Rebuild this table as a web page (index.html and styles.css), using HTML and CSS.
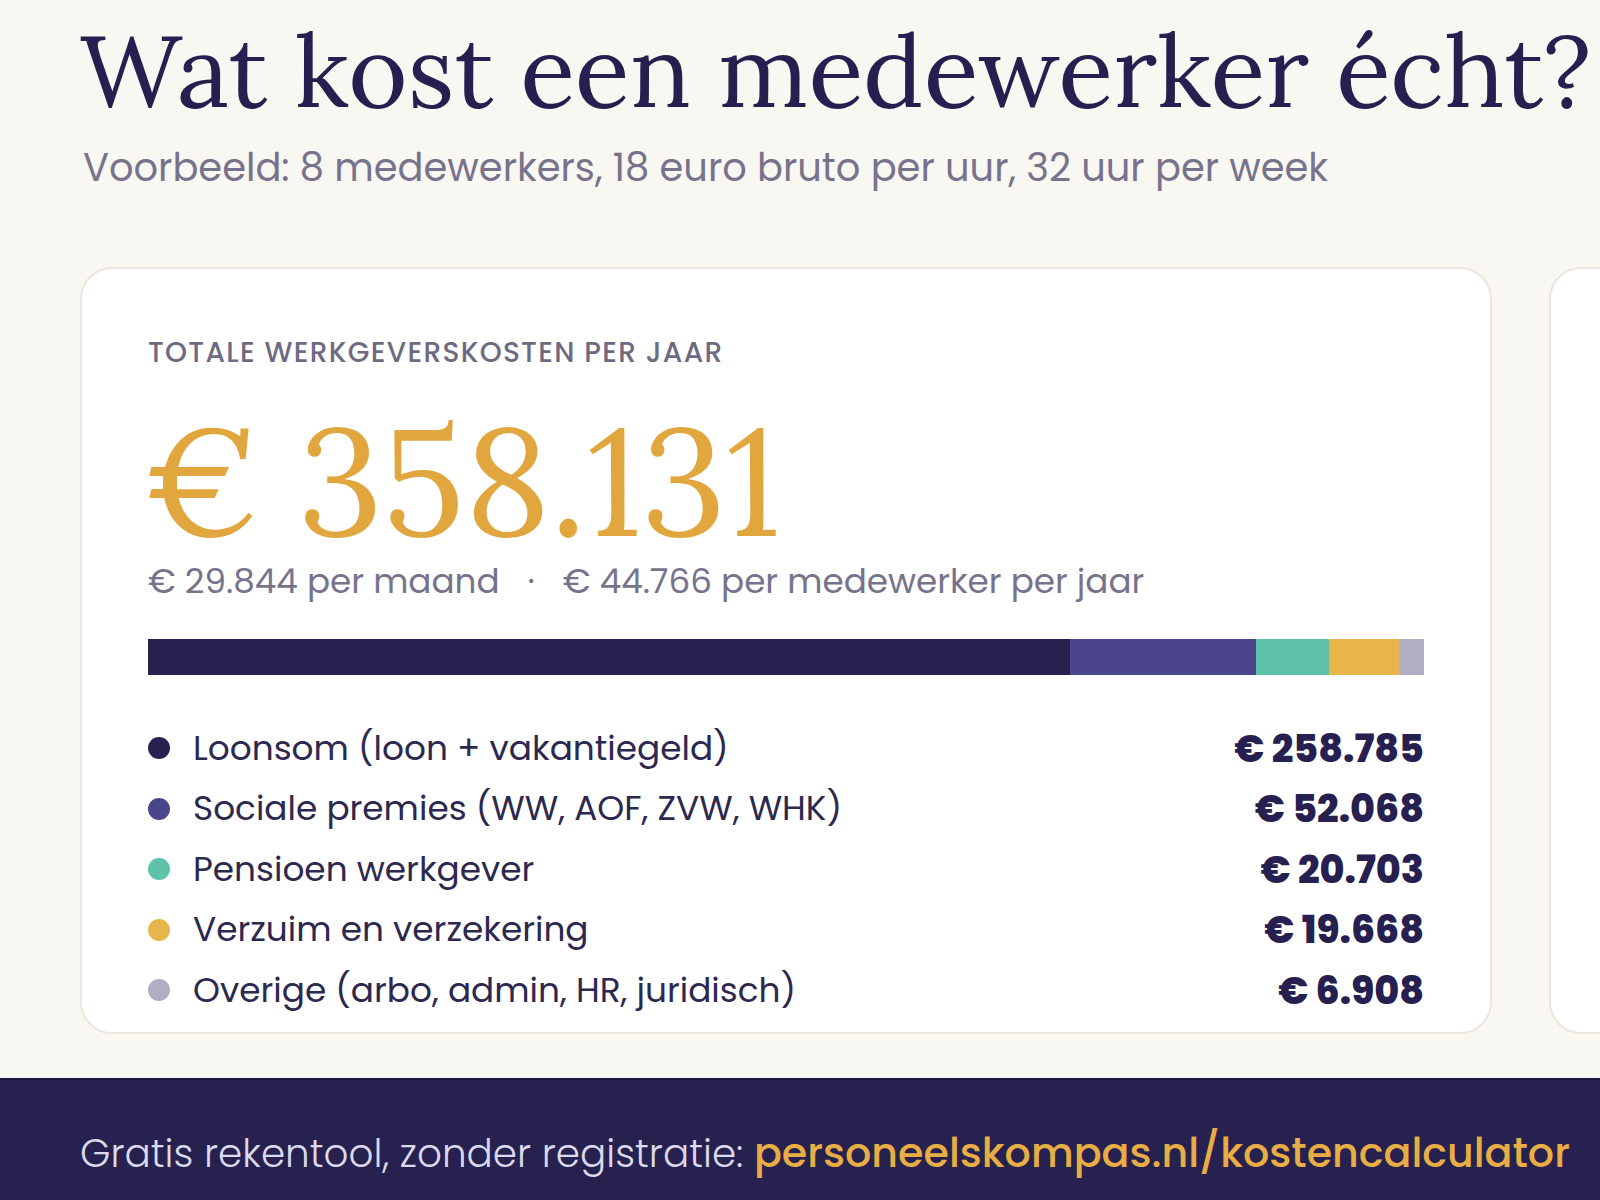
FILE: index.html
```html
<!DOCTYPE html>
<html lang="nl">
<head>
<meta charset="utf-8">
<title>Wat kost een medewerker écht?</title>
<link rel="stylesheet" href="styles.css">
</head>
<body>
<div class="page">
  <header class="intro">
    <h1 class="title">Wat kost een medewerker écht?</h1>
    <p class="subtitle">Voorbeeld: 8 medewerkers, 18 euro bruto per uur, 32 uur per week</p>
  </header>
  <div class="cards">
    <section class="card">
      <div class="label">TOTALE WERKGEVERSKOSTEN PER JAAR</div>
      <div class="total">€ 358.131</div>
      <div class="per">€ 29.844 per maand<span class="sep">·</span>€ 44.766 per medewerker per jaar</div>
      <div class="bar">
        <div class="seg seg-loon" style="width:72.26%"></div>
        <div class="seg seg-soc" style="width:14.54%"></div>
        <div class="seg seg-pen" style="width:5.78%"></div>
        <div class="seg seg-ver" style="width:5.49%"></div>
        <div class="seg seg-ove" style="width:1.93%"></div>
      </div>
      <ul class="legend">
        <li class="row"><span class="dot seg-loon"></span><span class="name">Loonsom (loon + vakantiegeld)</span><span class="val">€ 258.785</span></li>
        <li class="row"><span class="dot seg-soc"></span><span class="name">Sociale premies (WW, AOF, ZVW, WHK)</span><span class="val">€ 52.068</span></li>
        <li class="row"><span class="dot seg-pen"></span><span class="name">Pensioen werkgever</span><span class="val">€ 20.703</span></li>
        <li class="row"><span class="dot seg-ver"></span><span class="name">Verzuim en verzekering</span><span class="val">€ 19.668</span></li>
        <li class="row"><span class="dot seg-ove"></span><span class="name">Overige (arbo, admin, HR, juridisch)</span><span class="val">€ 6.908</span></li>
      </ul>
    </section>
    <section class="card card-next"></section>
  </div>
</div>
<footer class="footer">
  <span class="foot-text">Gratis rekentool, zonder registratie: </span><span class="foot-link">personeelskompas.nl/kostencalculator</span>
</footer>
</body>
</html>
```
FILE: styles.css
```css
html, body {
  margin: 0;
  padding: 0;
  width: 1600px;
  height: 1200px;
  overflow: hidden;
}
body {
  background: #f9f7f1;
  font-family: "Poppins", "Inter", "Noto Sans", sans-serif;
  color: #262050;
}
.page {
  padding: 16px 0 0 80px;
  width: 3200px;
}
.title {
  margin: 0;
  font-family: "Lora", "Liberation Serif", serif;
  font-weight: 400;
  font-size: 101.4px;
  line-height: 108px;
  color: #262050;
  white-space: nowrap;
}
.subtitle {
  margin: 22px 0 0 3px;
  font-size: 38.4px;
  line-height: 44px;
  color: #77738c;
  white-space: nowrap;
}
.cards {
  display: flex;
  gap: 57px;
  margin-top: 77px;
}
.card {
  box-sizing: border-box;
  flex: 0 0 1412px;
  height: 767px;
  background: #ffffff;
  border: 2px solid #ebe7de;
  border-radius: 32px;
  padding: 68px 66px 0 66px;
}
.label {
  font-size: 28px;
  line-height: 32px;
  font-weight: 500;
  letter-spacing: 1.3px;
  color: #6e6a82;
}
.total {
  margin: 52px 0 0 -4px;
  font-family: "Lora", "Liberation Serif", serif;
  font-size: 151px;
  line-height: 120px;
  color: #e2a63f;
  white-space: nowrap;
}
.per {
  margin-top: 19px;
  font-size: 34.2px;
  line-height: 42px;
  color: #77738c;
  white-space: nowrap;
}
.sep {
  margin: 0 28px;
}
.bar {
  display: flex;
  height: 36px;
  margin-top: 37px;
}
.seg { height: 100%; }
.seg-loon { background: #27214f; }
.seg-soc { background: #4b458c; }
.seg-pen { background: #5ec2a8; }
.seg-ver { background: #e8b54a; }
.seg-ove { background: #b1aec4; }
.legend {
  list-style: none;
  margin: 43px 0 0 0;
  padding: 0;
}
.row {
  display: flex;
  align-items: center;
  height: 60.5px;
  font-size: 34.3px;
  color: #2c2850;
}
.dot {
  flex: 0 0 22px;
  height: 22px;
  border-radius: 50%;
  margin-right: 23px;
}
.name {
  flex: 1;
  white-space: nowrap;
}
.val {
  font-size: 38px;
  font-weight: 800;
  color: #262050;
  white-space: nowrap;
}
.footer {
  box-sizing: border-box;
  position: fixed;
  left: 0;
  right: 0;
  bottom: 0;
  height: 122px;
  background: #27214f;
  border-top: 2px solid #1b1640;
  padding: 50px 0 0 80px;
  line-height: 46px;
  white-space: nowrap;
}
.foot-text { color: #dcdaee; font-weight: 300; font-size: 38.9px; }
.foot-link { color: #e8ae45; font-weight: 500; font-size: 41.2px; }
```
